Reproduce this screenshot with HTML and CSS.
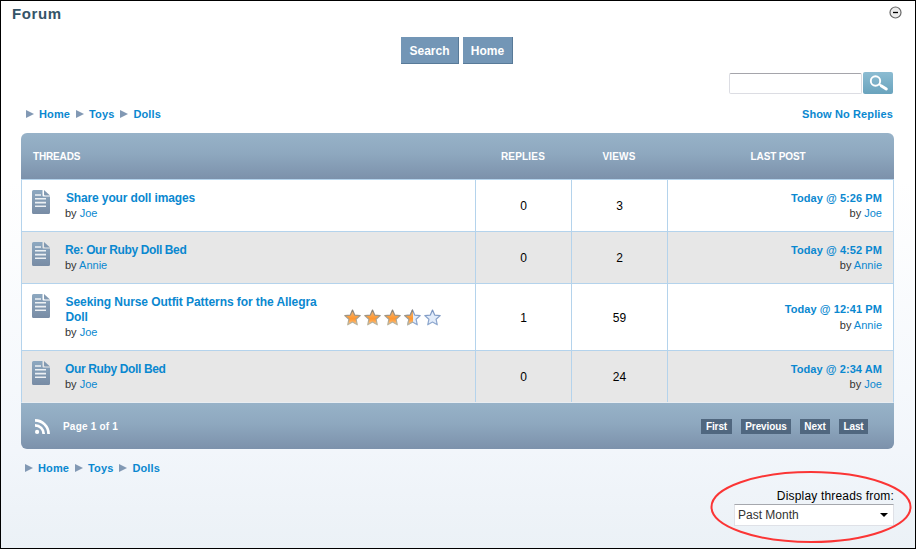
FILE: index.html
```html
<!DOCTYPE html>
<html lang="en">
<head>
<meta charset="utf-8">
<title>Forum</title>
<link rel="stylesheet" href="styles.css">
</head>
<body>
<svg class="defs" width="0" height="0">
  <defs>
    <linearGradient id="docFill" x1="0" y1="0" x2="0" y2="1"><stop offset="0" stop-color="#8da8c0"/><stop offset="1" stop-color="#788ca5"/></linearGradient>
    <linearGradient id="starFill" x1="0" y1="0" x2="0" y2="1"><stop offset="0" stop-color="#f5b878"/><stop offset=".6" stop-color="#ff962e"/><stop offset="1" stop-color="#ffc98c"/></linearGradient>
    <linearGradient id="starEdge" x1="0" y1="0" x2="0" y2="1"><stop offset="0" stop-color="#8b8073"/><stop offset="1" stop-color="#c0b8a0"/></linearGradient>
    <linearGradient id="emptyEdge" x1="0" y1="0" x2="0" y2="1"><stop offset="0" stop-color="#7b96c2"/><stop offset="1" stop-color="#92abd0"/></linearGradient>
    <clipPath id="leftHalf"><path d="M0 0H9V17H0Z"/></clipPath>
    <symbol id="doc" viewBox="0 0 18 24">
      <path fill="url(#docFill)" d="M1.500 0H10.500V5.500Q10.500 6.500 11.500 6.500H18V22.500Q18 24 16.500 24H1.500Q0 24 0 22.500V1.500Q0 0 1.500 0Z"/>
      <path fill="#8299b1" d="M12 0L18 5.500H13Q12 5.500 12 4.500Z"/>
      <path fill="none" stroke="#fff" stroke-opacity=".85" stroke-width="1.600" d="M3 5H9M3 8.800H14M3 12.600H14M3 16.300H14"/>
    </symbol>
    <symbol id="shape" viewBox="0 0 17 17"><path stroke-width="1.200" stroke-linejoin="round" d="M8.500 1L10.700 6.100L16.200 6.600L12.100 10.300L13.300 15.800L8.500 13L3.700 15.800L4.900 10.300L.8 6.600L6.300 6.100Z"/></symbol>
  </defs>
</svg>
<div class="page">
  <header class="titlebar">
    <h1>Forum</h1>
    <svg class="collapse" viewBox="0 0 13 13"><circle cx="6.500" cy="6.500" r="5.500" fill="#ececec" stroke="#666" stroke-width="1.200"/><path d="M4 6.500H9" stroke="#000" stroke-width="1.300"/></svg>
  </header>
  <nav class="buttons"><a class="btn search">Search</a><a class="btn home">Home</a></nav>
  <div class="searchbox">
    <input class="field" type="text">
    <div class="go"><svg viewBox="0 0 30 22"><circle cx="12.500" cy="9" r="4.700" fill="none" stroke="#fff" stroke-width="1.900"/><path d="M16 12L18.500 14" stroke="#fff" stroke-width="2"/><path d="M18.500 14L23.300 17" stroke="#fff" stroke-width="3" stroke-linecap="round"/></svg></div>
  </div>
  <div class="crumbrow">
    <nav class="crumbs"><a>Home</a><a>Toys</a><a>Dolls</a></nav>
    <a class="noreplies">Show No Replies</a>
  </div>
  <section class="table">
    <div class="head cols"><div class="th first"><span>THREADS</span></div><div class="th">REPLIES</div><div class="th">VIEWS</div><div class="th tight">LAST POST</div></div>
    <div class="row cols">
      <div class="thread"><svg class="doc"><use href="#doc"/></svg><div class="info"><a class="title t1">Share your doll images</a><p>by <a>Joe</a></p></div></div>
      <div class="num">0</div><div class="num">3</div>
      <div class="last"><a class="when">Today @ 5:26 PM</a><p>by <a>Joe</a></p></div>
    </div>
    <div class="row cols alt">
      <div class="thread"><svg class="doc"><use href="#doc"/></svg><div class="info"><a class="title t2">Re: Our Ruby Doll Bed</a><p>by <a>Annie</a></p></div></div>
      <div class="num">0</div><div class="num">2</div>
      <div class="last"><a class="when">Today @ 4:52 PM</a><p>by <a>Annie</a></p></div>
    </div>
    <div class="row cols tall">
      <div class="thread"><svg class="doc"><use href="#doc"/></svg><div class="info"><a class="title t3">Seeking Nurse Outfit Patterns for the Allegra<br>Doll</a><p>by <a>Joe</a></p></div>
        <div class="stars">
          <svg class="star full"><use href="#shape"/></svg><svg class="star full"><use href="#shape"/></svg><svg class="star full"><use href="#shape"/></svg><svg class="star"><use class="empty" href="#shape"/><g clip-path="url(#leftHalf)"><use class="filled" href="#shape"/></g></svg><svg class="star empty"><use href="#shape"/></svg>
        </div>
      </div>
      <div class="num">1</div><div class="num">59</div>
      <div class="last"><a class="when">Today @ 12:41 PM</a><p>by <a>Annie</a></p></div>
    </div>
    <div class="row cols alt final">
      <div class="thread"><svg class="doc"><use href="#doc"/></svg><div class="info"><a class="title t4">Our Ruby Doll Bed</a><p>by <a>Joe</a></p></div></div>
      <div class="num">0</div><div class="num">24</div>
      <div class="last"><a class="when">Today @ 2:34 AM</a><p>by <a>Joe</a></p></div>
    </div>
    <div class="foot">
      <svg class="rss" viewBox="0 0 15 15"><circle cx="2.100" cy="12.900" r="2.100" fill="#fff"/><path d="M0 6.300A8.700 8.700 0 0 1 8.700 15M0 1.400A13.600 13.600 0 0 1 13.600 15" fill="none" stroke="#fff" stroke-width="2.700"/></svg>
      <span class="pages">Page 1 of 1</span>
      <nav class="pager"><a class="p1">First</a><a class="p2">Previous</a><a class="p3">Next</a><a class="p4">Last</a></nav>
    </div>
  </section>
  <nav class="crumbs lower"><a>Home</a><a>Toys</a><a>Dolls</a></nav>
  <div class="filter">
    <label>Display threads from:</label>
    <div class="select"><span>Past Month</span><i></i></div>
    <svg class="ring" viewBox="0 0 202 74"><ellipse cx="101" cy="37" rx="99.500" ry="35" fill="none" stroke="#fb3535" stroke-width="2"/></svg>
  </div>
</div>
</body>
</html>
```
FILE: styles.css
```css
* { box-sizing: border-box; }
body, h1, p { margin: 0; }
body { font-family: "Liberation Sans", Arial, sans-serif; color: #333; }
a { color: #0a88d0; white-space: nowrap; }
.defs { display: block; }
.page { width: 916px; height: 549px; border: 1px solid #000; overflow: hidden; background: linear-gradient(#fff 0, #fff 180px, #f2f6fb 450px, #ebf1f6 549px); }

.titlebar { height: 35px; display: flex; justify-content: space-between; padding: 4px 13px 0 11px; }
h1 { font-size: 15px; line-height: 17px; letter-spacing: .6px; color: #355468; }
.collapse { width: 13px; height: 13px; margin-top: 1px; }
.buttons { display: flex; justify-content: center; gap: 4px; height: 27px; margin-top: 1px; padding-right: 2px; }
.btn { height: 27px; background: #7396b6; border-right: 1px solid #587a98; border-bottom: 1px solid #587a98; color: #fff; font-size: 12px; font-weight: bold; line-height: 28px; text-align: center; }
.search { width: 58px; }
.home { width: 50px; }

.searchbox { display: flex; justify-content: flex-end; gap: 1px; margin-top: 8px; padding-right: 22px; height: 22px; }
.field { width: 133px; height: 21px; margin-top: 1px; background: #fff; border: 1px solid #dcdde3; border-top-color: #a5a5ab; border-radius: 2px; outline: 0; }
.go { width: 30px; height: 22px; border-radius: 2px; background: linear-gradient(#8cbcd2, #69a3bd); }
.go svg { display: block; width: 30px; height: 22px; }

.crumbrow { display: flex; justify-content: space-between; align-items: flex-start; height: 39px; padding: 12px 22px 0 25px; }
.crumbs { display: flex; gap: 5px; }
.crumbs a, .noreplies { font-size: 11px; font-weight: bold; line-height: 16px; letter-spacing: .12px; }
.crumbs a { display: flex; align-items: center; gap: 5px; }
.crumbs a + a { margin-left: 1px; }
.crumbs a::before { content: ""; border-left: 8px solid #8299b4; border-top: 4.500px solid transparent; border-bottom: 4.500px solid transparent; }

.table { width: 873px; margin-left: 20px; border-radius: 6px; overflow: hidden; }
.cols { display: grid; grid-template-columns: 453px 96px 96px 1fr; }
.head, .foot { height: 46px; background: linear-gradient(#97b2c8, #8ea8bf 45%, #7c91ab); color: #fff; }
.head { padding-left: 1px; }
.th { font-size: 10px; font-weight: bold; line-height: 47px; text-align: center; letter-spacing: .2px; }
.th.first { text-align: left; padding-left: 11px; letter-spacing: -.15px; }
.th.tight { letter-spacing: -.15px; padding-right: 5px; }
.row { height: 52px; background: #fff; border: 1px solid #b4d3ec; border-bottom: 0; }
.row > div + div { border-left: 1px solid #b4d3ec; }
.alt { background: #e7e7e7; }
.tall { height: 67px; }
.final { height: 53px; border-bottom: 1px solid #e9edf1; }
.thread { display: flex; padding: 10px 0 0 10px; }
.doc { width: 18px; height: 24px; flex: none; }
.info { margin-left: 15px; width: 279px; }
.title { display: block; position: relative; top: 1px; font-size: 12px; font-weight: bold; line-height: 15px; }
.t1 { letter-spacing: -.14px; padding-left: 1px; }
.t2 { letter-spacing: -.38px; }
.t3 { letter-spacing: -.07px; padding-left: .5px; }
.t4 { letter-spacing: -.36px; }
p { font-size: 11px; line-height: 16px; }
.num { display: flex; align-items: center; justify-content: center; font-size: 12px; color: #000; padding-top: 1px; }
.last { display: flex; flex-direction: column; align-items: flex-end; justify-content: center; padding-right: 11px; }
.when { position: relative; top: 1px; font-size: 11px; font-weight: bold; line-height: 15px; letter-spacing: .07px; }
.tall .when { top: 0; }
.stars { display: flex; gap: 3px; padding-top: 15px; }
.star { width: 17px; height: 17px; }
.full, .filled { fill: url(#starFill); stroke: url(#starEdge); }
.empty { fill: #e2ecfa; stroke: url(#emptyEdge); }

.foot { display: flex; align-items: center; padding: 0 26px 0 14px; }
.rss { width: 15px; height: 15px; margin-top: 1px; }
.pages { margin-left: 13px; font-size: 10px; font-weight: bold; padding-top: 1px; letter-spacing: .2px; }
.pager { display: flex; gap: 9px; margin-left: auto; padding-top: 1px; }
.pager a { height: 15px; background: #50677f; color: #fff; font-size: 10px; font-weight: bold; line-height: 15px; letter-spacing: -.1px; text-align: center; }
.p1 { width: 31px; }
.p2 { width: 50px; }
.p3 { width: 30px; }
.p4 { width: 29px; }
.lower { padding: 11px 0 0 24px; }

.filter { position: relative; width: 160px; margin: 12px 0 0 733px; text-align: right; color: #000; }
label { display: block; font-size: 12px; line-height: 16px; letter-spacing: .18px; white-space: nowrap; }
.select { display: flex; align-items: center; justify-content: space-between; height: 22px; background: #fff; border: 1px solid #dfe1e7; border-top-color: #a5a7ad; padding: 0 5px 0 3px; font-size: 12px; color: #333; }
.select i { border: 4px solid transparent; border-top-color: #000; border-bottom: 0; }
.ring { position: absolute; left: -24px; top: -18px; width: 202px; height: 74px; }
```
